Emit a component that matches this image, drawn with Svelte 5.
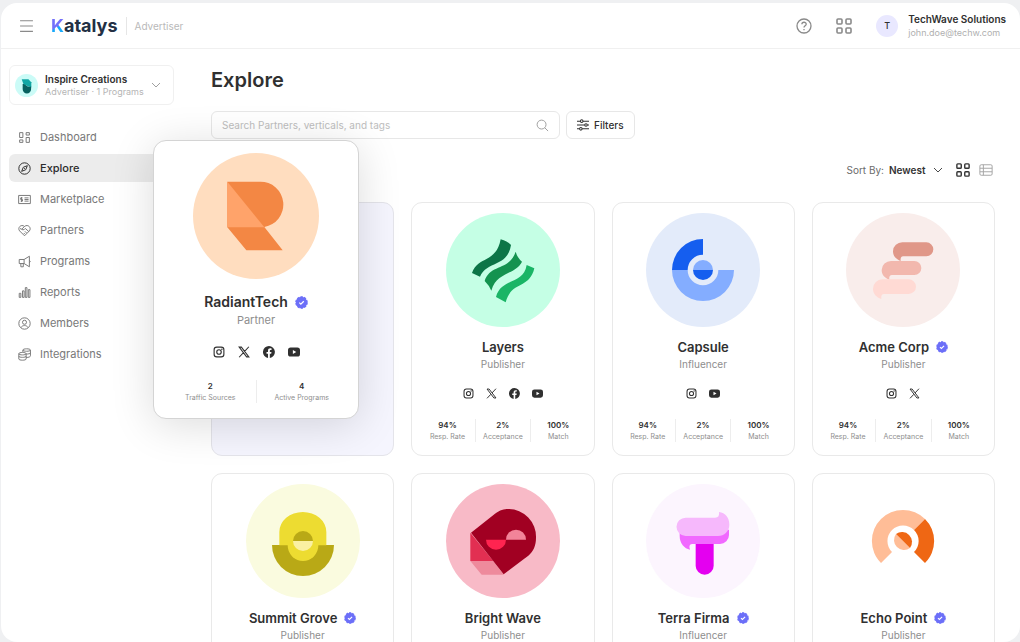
<script lang="ts">
	// Partner discovery page: header, program sidebar and the explore grid.
	// The first grid slot shows its card lifted above the page.
	const nav = [
		{ label: 'Dashboard', d: 'M2 2h4v6H2zM10 2h4v3h-4zM2 11h4v3H2zM10 8h4v6h-4z' },
		{ label: 'Explore', d: 'M8 1a7 7 0 1 0 0 14a7 7 0 0 0 0-14zM11.5 4.5L9.5 9.5L4.5 11.5L6.5 6.5zM7.5 8.5l1-1' },
		{ label: 'Marketplace', d: 'M.8 3h14.4v10H.8zM5.5 6H3.3v2h2.2v2H3.3M4.4 5v6M8 6h5M8 8h5M8 10h5' },
		{ label: 'Partners', d: 'M8 14.5L2 8.5C-1 5 3.5 -.5 8 3C12.5 -.5 17 5 14 8.5zM8 3L4.5 6.500q1.500 1.500 3.500 0l1-1l4.500 4M2.500 5.500l2 1M7 11l1.500 1.500M8.500 9l2 2' },
		{ label: 'Programs', d: 'M1.500 5.500h6L14 1.500v13L7.500 10.500h-6zM7.500 5.500v5M3.500 10.500v4h3v-4M14 6.500q2 1.500 0 3' },
		{ label: 'Reports', d: 'M1.500 9h2v5h-2zM5.500 6h2v8h-2zM9 2h2v12H9zM12.700 4.500h2V14h-2z' },
		{ label: 'Members', d: 'M8 1a7 7 0 1 0 0 14a7 7 0 0 0 0-14zM8 4a2.500 2.500 0 1 0 0 5a2.500 2.500 0 0 0 0-5zM3.800 13C5 9.700 11 9.700 12.200 13' },
		{ label: 'Integrations', d: 'M1 7v6.500c0 2 9 2 9 0V7M1 7c0-2 9-2 9 0s-9 2-9 0M1 10c0 2 9 2 9 0M6 5V2.500c0-2 9.300-2 9.300 0v7c0 1.500-2 2-5.300 2.200M6 2.500c0 2 9.300 2 9.300 0M10 7.500c3 0 5.300-.7 5.300-1.700' },
	];

	const stats = [
		{ value: '94%', label: 'Resp. Rate' },
		{ value: '2%', label: 'Acceptance' },
		{ value: '100%', label: 'Match' },
	];

	const featured = {
		name: 'RadiantTech',
		type: 'Partner',
		logo: 'radiant',
		color: '#ffddbf',
		verified: true,
		socials: ['instagram', 'x', 'facebook', 'youtube'],
		stats: [
			{ value: '2', label: 'Traffic Sources' },
			{ value: '4', label: 'Active Programs' },
		],
	};

	const partners = [
		{ name: 'Layers', type: 'Publisher', logo: 'layers', color: '#c5ffe5', verified: false, socials: ['instagram', 'x', 'facebook', 'youtube'], stats },
		{ name: 'Capsule', type: 'Influencer', logo: 'capsule', color: '#e3ebfa', verified: false, socials: ['instagram', 'youtube'], stats },
		{ name: 'Acme Corp', type: 'Publisher', logo: 'acme', color: '#f9edeb', verified: true, socials: ['instagram', 'x'], stats },
		{ name: 'Summit Grove', type: 'Publisher', logo: 'summit', color: '#fafbdf', verified: true, socials: ['instagram', 'x'], stats },
		{ name: 'Bright Wave', type: 'Publisher', logo: 'bright', color: '#f8bac7', verified: false, socials: ['instagram', 'youtube'], stats },
		{ name: 'Terra Firma', type: 'Influencer', logo: 'terra', color: '#fcf5fe', verified: true, socials: ['instagram', 'x'], stats },
		{ name: 'Echo Point', type: 'Publisher', logo: 'echo', color: '#ffffff', verified: true, socials: ['instagram', 'facebook'], stats },
	];

	let active = $state('Explore');
	let query = $state('');
	let sort = $state('Newest');
</script>

{#snippet logo(name: string)}
	<svg viewBox="0 0 342 342" aria-hidden="true">
		{#if name === 'radiant'}
			<g transform="scale(.905)">
				<path fill="#f38744" d="M103 86H201A68.500 68.500 0 0 1 214 222L269 292H160L103 223z" />
				<path fill="#ffa36a" d="M103 86V223H214z" />
			</g>
		{:else if name === 'layers'}
			<path fill="#0c7547" d="M164 79C177 83 187 88 195 96C184 164 122 143 102 191L78 180C97 128 150 152 164 79z" />
			<path fill="#14934f" d="M209 116Q214 134 228 146C208 186 152 176 136 233Q130 218 116 204C132 152 190 174 209 116z" />
			<path fill="#1ab566" d="M242 156L265 166C250 230 196 203 179 268L150 252C165 193 232 217 242 156z" />
		{:else if name === 'capsule'}
			<path fill="#155eef" d="M171 78A93 93 0 0 0 78 171H125A46 46 0 0 1 171 125z" />
			<path fill="#84adff" d="M78 171A93 93 0 0 0 264 171H217A46 46 0 0 1 125 171z" />
			<path fill="#84adff" d="M141 171a30 30 0 0 1 60 0z" />
			<path fill="#155eef" d="M141 171a30 30 0 0 0 60 0z" />
		{:else if name === 'acme'}
			<path fill="#e09788" d="M170 88H241a21 21 0 0 1 0 42H172Q162 130 164 144C150 138 141 130 141 115A28 27 0 0 1 170 88z" />
			<path fill="#f2b8ae" d="M136 144H205a21 21 0 0 1 0 42H138Q128 186 130 200C116 194 107 186 107 171A28 27 0 0 1 136 144z" />
			<path fill="#ffdad4" d="M110 199H188a21.500 21.500 0 0 1 0 44H114Q104 243 106 258C91 252 81 243 81 227A28 28 0 0 1 110 199z" />
		{:else if name === 'summit'}
			<path fill="#b9a916" d="M78 183a93 93 0 0 0 186 0z" />
			<path fill="#eddc31" d="M100 184V144A70.500 60 0 0 1 241 144V184H217A46 47 0 0 1 125 184z" />
			<path fill="#b9a916" d="M141 171a30 30 0 0 1 60 0z" />
			<path fill="#faf0a2" d="M141 171a30 30 0 0 0 60 0z" />
		{:else if name === 'bright'}
			<path fill="#e22f52" d="M73 146V231H142z" />
			<path fill="#ee8a9c" d="M73 231H142L173 272H107z" />
			<path fill="#a10022" d="M75 146L147 89C162 78 174 75 187 75A83 83 0 0 1 270 161C270 185 262 202 247 215L173 271z" />
			<path fill="#ff2450" d="M120 167a30 30 0 0 0 60 0z" />
			<path fill="#f28499" d="M180 167a30 30 0 0 1 60 0z" />
		{:else if name === 'terra'}
			<path fill="#e400f0" d="M149 176H203V245a27 27 0 0 1-54 0z" />
			<path fill="#f169ff" d="M101 140V156C101 178 115 194 132 197Q126 180 140 180H222A27 27 0 0 0 249 153V137z" />
			<path fill="#f6b8fc" d="M119 101H207Q222 101 219 84C238 87 250 100 250 122A34 34 0 0 1 216 156H119A27.500 27.500 0 0 1 119 101z" />
		{:else}
			<path fill="#ffbd97" d="M105 237A93 93 0 0 1 237 105L204 138A46 46 0 0 0 138 204z" />
			<path fill="#ef6714" d="M237 105A93 93 0 0 1 237 237L204 204A46 46 0 0 0 204 138z" />
			<path fill="#ffbd97" d="M150 150A30 30 0 0 0 192 192z" />
			<path fill="#ef6714" d="M150 150A30 30 0 0 1 192 192z" />
		{/if}
	</svg>
{/snippet}

{#snippet social(name: string)}
	<svg viewBox="0 0 16 16" role="img" aria-label={name}>
		{#if name === 'instagram'}
			<rect x="1.500" y="1.500" width="13" height="13" rx="3.500" fill="none" stroke="currentColor" stroke-width="1.500" />
			<circle cx="8" cy="8" r="3" fill="none" stroke="currentColor" stroke-width="1.500" />
			<circle cx="11.800" cy="4.200" r="1" fill="currentColor" />
		{:else if name === 'x'}
			<path fill="none" stroke="currentColor" stroke-width="1.400" d="M1.500 1.500h3L14.500 14.500h-3zM14.500 1L8.800 7.200M7 9.200L1.500 15" />
		{:else if name === 'facebook'}
			<path fill="currentColor" d="M8 0a8 8 0 0 0-1.300 15.900V10.300h-2V8h2V6.200C6.700 4.200 7.900 3.100 9.700 3.100c.9 0 1.700.2 1.700.2v1.900h-1c-1 0-1.300.6-1.300 1.200V8h2.200l-.4 2.300H9.100v5.600A8 8 0 0 0 8 0z" />
		{:else}
			<path fill="currentColor" fill-rule="evenodd" d="M3.500 2h9A3.500 3.500 0 0 1 16 5.500v5a3.500 3.500 0 0 1-3.500 3.500h-9A3.500 3.500 0 0 1 0 10.500v-5A3.500 3.500 0 0 1 3.500 2zM6.500 5.300v5.400L11 8z" />
		{/if}
	</svg>
{/snippet}

{#snippet grid4()}
	<svg class="icon" viewBox="0 0 16 16" stroke-width="1.600" aria-hidden="true">
		<rect x="1" y="1" width="5" height="5" rx="1" />
		<rect x="10" y="1" width="5" height="5" rx="1" />
		<rect x="1" y="10" width="5" height="5" rx="1" />
		<rect x="10" y="10" width="5" height="5" rx="1" />
	</svg>
{/snippet}

{#snippet chevron()}
	<svg class="icon chevron" viewBox="0 0 10 10" aria-hidden="true"><path d="M1 3l4 4l4-4" /></svg>
{/snippet}

{#snippet card(p: typeof featured)}
	<div class="avatar" style="background: {p.color}">{@render logo(p.logo)}</div>
	<h2>
		{p.name}
		{#if p.verified}
			<svg class="badge" viewBox="0 0 16 16" role="img" aria-label="Verified">
				<circle cx="8" cy="8" r="7" fill="#6c6ff8" stroke="#6c6ff8" stroke-width="1.500" stroke-dasharray="3 1.400" />
				<path d="M5.300 8.200l1.900 1.800l3.600-3.600" fill="none" stroke="#fff" stroke-width="1.500" />
			</svg>
		{/if}
	</h2>
	<p class="type">{p.type}</p>
	<div class="socials">
		{#each p.socials as s (s)}
			{@render social(s)}
		{/each}
	</div>
	<dl class="stats">
		{#each p.stats as s (s.label)}
			<div>
				<dt>{s.label}</dt>
				<dd>{s.value}</dd>
			</div>
		{/each}
	</dl>
{/snippet}

<div class="app">
	<header>
		<button class="plain menu" aria-label="Menu">
			<svg class="icon" viewBox="0 0 14 14" aria-hidden="true"><path d="M1 2.500h12M1 7.500h12M1 12.500h12" /></svg>
		</button>
		<a class="brand" href="/"><span>K</span>atalys</a>
		<span class="role">Advertiser</span>
		<div class="account">
			<button class="plain" aria-label="Help">
				<svg class="icon" viewBox="0 0 16 16" stroke-width="1.300" aria-hidden="true">
					<circle cx="8" cy="8" r="7" />
					<path d="M5.900 6.300C5.900 3.600 10.200 3.600 10.200 6.200C10.200 7.800 8 7.700 8 9.500M8 11v1.300" />
				</svg>
			</button>
			<button class="plain" aria-label="Apps">{@render grid4()}</button>
			<a class="user" href="/account">
				<span class="initial">T</span>
				<span class="who">
					<strong>TechWave Solutions</strong>
					<small>john.doe@techw.com</small>
				</span>
			</a>
		</div>
	</header>

	<div class="body">
		<aside>
			<button class="program">
				<svg class="program-logo" viewBox="0 0 24 24" aria-hidden="true">
					<circle cx="12" cy="12" r="12" fill="#cbfbf7" />
					<path fill="#11a7a4" d="M7 5.500h7l3 3V14L9 11z" />
					<path fill="#07615f" d="M8 10.500C12 10.500 11 14 16.800 13V16a4.400 4.400 0 0 1-8.800 0z" />
				</svg>
				<span class="program-text">
					<strong>Inspire Creations</strong>
					<small>Advertiser · 1 Programs</small>
				</span>
				{@render chevron()}
			</button>
			<nav>
				{#each nav as item (item.label)}
					<a href="#{item.label.toLowerCase()}" class:active={active === item.label} onclick={() => (active = item.label)}>
						<svg class="icon" viewBox="0 0 16 16" stroke-width="1.200" aria-hidden="true"><path d={item.d} /></svg>
						{item.label}
					</a>
				{/each}
			</nav>
		</aside>

		<main>
			<h1>Explore</h1>
			<div class="tools">
				<div class="search">
					<input type="search" aria-label="Search" placeholder="Search Partners, verticals, and tags" bind:value={query} />
					<svg class="icon" viewBox="0 0 14 14" aria-hidden="true"><circle cx="6" cy="6" r="4.800" /><path d="M9.500 9.500L13 13" /></svg>
				</div>
				<button class="filters">
					<svg class="icon" viewBox="0 0 14 14" stroke-width="1.200" aria-hidden="true">
						<path d="M0 2.500h4M7 2.500h7M0 7h9M12 7h2M0 11.500h3M6 11.500h8" />
						<circle cx="5.500" cy="2.500" r="1.500" /><circle cx="10.500" cy="7" r="1.500" /><circle cx="4.500" cy="11.500" r="1.500" />
					</svg>
					Filters
				</button>
			</div>

			<div class="sort">
				<label for="sort">Sort By:</label>
				<span class="select">
					<select id="sort" bind:value={sort}>
						<option>Newest</option>
						<option>Oldest</option>
						<option>Name</option>
					</select>
					{@render chevron()}
				</span>
				<button class="plain on" aria-label="Grid view">{@render grid4()}</button>
				<button class="plain" aria-label="List view">
					<svg class="icon" viewBox="0 0 16 16" stroke-width="1.100" aria-hidden="true"><path d="M2.500 2h11q1.500 0 1.500 1.500v9q0 1.500-1.500 1.500h-11q-1.500 0-1.500-1.500v-9q0-1.500 1.500-1.500zM1 6h14M1 10h14M5 2v12" /></svg>
				</button>
			</div>

			<div class="grid">
				<div class="slot">
					<article class="card lifted">{@render card(featured)}</article>
				</div>
				{#each partners as p (p.name)}
					<article class="card">{@render card(p)}</article>
				{/each}
			</div>
		</main>
	</div>
</div>

<style>
	:global(body) { margin: 0; background: #eff0f2; }
	.app { display: flex; flex-direction: column; box-sizing: border-box; height: 100vh; padding: 3px 0 0 1px; overflow: hidden; font-family: Inter, "Open Sans", sans-serif; color: #303030; }
	button, input, select { font: inherit; color: inherit; }
	button { cursor: pointer; }
	a { color: inherit; text-decoration: none; }
	strong { font-weight: 600; }
	.icon { fill: none; stroke: currentColor; flex: none; }
	.chevron { width: 10px; height: 10px; }
	.plain { display: flex; padding: 0; border: 0; background: none; color: #8a8a8a; }

	header { display: flex; align-items: center; flex: none; height: 45px; padding: 0 14px 0 18px; background: #fff; border-bottom: 1px solid #f0f0f0; border-radius: 16px 16px 0 0; }
	.menu .icon { width: 15px; height: 15px; }
	.brand { margin-left: 17px; font-size: 18px; line-height: 24px; font-weight: 700; color: #233044; }
	.brand span { background: linear-gradient(150deg, #7370fa 52%, #16a9fa 58%); background-clip: text; color: transparent; }
	.role { margin-left: 8px; padding-left: 8px; border-left: 1px solid #e6e6e6; font-size: 10px; line-height: 18px; color: #b9b9b9; }
	.account { display: flex; align-items: center; gap: 24px; margin-left: auto; }
	.account .icon { width: 16px; height: 16px; }
	.user { display: flex; align-items: center; gap: 10px; }
	.initial { width: 22px; height: 22px; border-radius: 50%; background: #e9e8ff; text-align: center; font-size: 9px; line-height: 22px; font-weight: 500; }
	.who { display: flex; flex-direction: column; font-size: 10px; line-height: 14px; }
	.who small { font-size: 9px; line-height: 14px; color: #b0b0b0; }

	/* the sidebar scrolls with the grid so the lifted card can cover it */
	.body { display: flex; align-items: flex-start; flex: 1; min-height: 0; background: #fff; border-radius: 0 0 16px 16px; overflow: hidden auto; scrollbar-width: none; }
	aside { flex: none; width: 165px; padding: 16px 0 0 8px; }
	.program { display: flex; align-items: center; box-sizing: border-box; width: 100%; height: 40px; padding: 0 12px 0 5px; gap: 7px; background: #fff; border: 1px solid #f0f0f0; border-radius: 6px; text-align: left; }
	.program-logo { width: 23px; height: 23px; flex: none; }
	.program-text { display: flex; flex: 1; flex-direction: column; font-size: 10px; line-height: 13px; white-space: nowrap; }
	.program-text small { font-size: 9px; line-height: 11px; color: #b5b5b5; }
	.program .chevron { color: #a0a0a0; }
	nav { display: flex; flex-direction: column; gap: 3px; margin-top: 18px; }
	nav a { display: flex; align-items: center; gap: 9px; height: 28px; padding-left: 9px; border-radius: 6px; font-size: 11px; color: #787878; }
	nav a .icon { width: 13px; height: 13px; }
	nav a.active { background: #ececec; font-weight: 500; color: #2c2c2c; }

	main { flex: 1; min-width: 0; padding: 16px 25px 17px 37px; }
	h1 { margin: 0; font-size: 20px; line-height: 30px; font-weight: 600; }
	.tools { display: flex; gap: 6px; margin-top: 16px; }
	.search { display: flex; align-items: center; box-sizing: border-box; flex: 0 1 349px; height: 28px; padding: 0 10px; border: 1px solid #e7e7e7; border-radius: 6px; }
	.search input { flex: 1; min-width: 0; padding: 0; border: 0; outline: 0; background: none; font-size: 10px; }
	.search input::placeholder { color: #bdbdbd; opacity: 1; }
	.search .icon { width: 13px; height: 13px; color: #999; }
	.filters { display: flex; align-items: center; gap: 5px; height: 28px; padding: 0 10px; background: #fff; border: 1px solid #e7e7e7; border-radius: 6px; font-size: 10px; font-weight: 500; }
	.filters .icon { width: 12px; height: 12px; }
	.sort { display: flex; align-items: center; justify-content: flex-end; height: 16px; padding-right: 2px; margin-top: 23px; font-size: 10px; color: #6b6b6b; }
	.select { display: flex; align-items: center; margin: 0 13px 0 5px; color: #4a4a4a; }
	.select select { width: 44px; padding: 0; border: 0; background: none; appearance: none; font-size: 10px; font-weight: 600; color: #333; }
	.sort .icon:not(.chevron) { width: 14px; height: 14px; }
	.sort .plain { margin-left: 9px; color: #a6a6a6; }
	.sort .select + .plain { margin-left: 0; color: #333; }

	.grid { display: grid; grid-template-columns: repeat(4, minmax(0, 1fr)); gap: 17px; margin-top: 24px; }
	.slot { position: relative; background: #f5f5fe; border: 1px solid #e4e4ea; border-radius: 11px; }
	.card { display: flex; flex-direction: column; align-items: center; padding: 10px 8px 13px; background: #fff; border: 1px solid #e9e9e9; border-radius: 11px; }
	.avatar { width: 114px; height: 114px; border-radius: 50%; }
	.avatar svg { display: block; width: 100%; height: 100%; }
	h2 { display: flex; align-items: center; gap: 7px; margin: 10px 0 0; font-size: 13px; line-height: 20px; font-weight: 600; }
	.badge { width: 12px; height: 12px; }
	.type { margin: 0; font-size: 10px; line-height: 14px; color: #8e8e8e; }
	.socials { display: flex; gap: 12px; margin-top: 17px; }
	.socials svg { width: 11px; height: 11px; }
	.stats { display: flex; align-self: stretch; margin: 20px 0 0; text-align: center; }
	.stats div { display: flex; flex: 1; flex-direction: column-reverse; border-left: 1px solid #ededed; }
	.stats div:first-child { border-left: 0; }
	.stats dt { font-size: 7px; line-height: 11px; color: #8e8e8e; }
	.stats dd { margin: 0; font-size: 8px; line-height: 12px; font-weight: 600; }

	/* lifted card overlaps the sidebar and the search bar */
	.lifted { position: absolute; z-index: 2; top: -63px; left: -59px; width: 182px; padding: 12px 11px 15px; border-color: #d4d4d4; border-radius: 13px; box-shadow: 0 6px 44px rgba(0, 0, 0, 0.14); }
	.lifted .avatar { width: 126px; height: 126px; }
	.lifted h2 { margin-top: 13px; font-size: 14px; }
	.lifted .badge { width: 13px; height: 13px; }
	.lifted .type { margin-top: 1px; font-size: 11px; }
	.lifted .socials { gap: 13px; margin-top: 19px; }
	.lifted .socials svg { width: 12px; height: 12px; }
	.lifted .stats { margin-top: 22px; }
</style>
